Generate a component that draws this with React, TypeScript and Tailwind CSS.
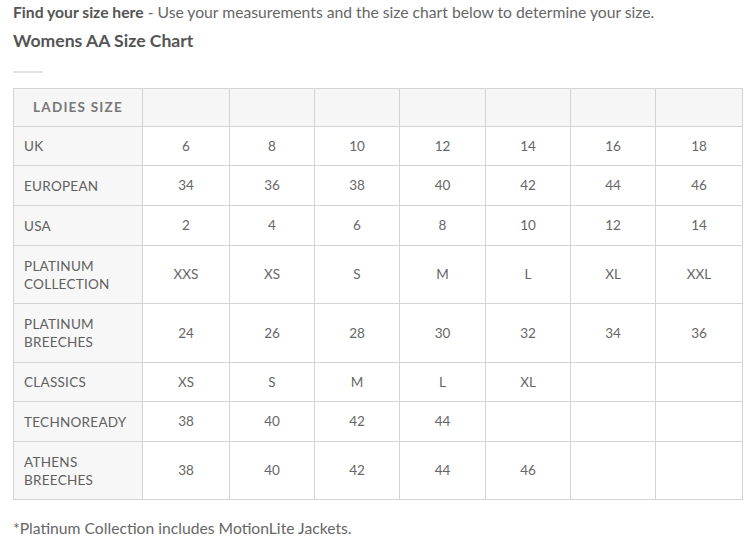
import React from 'react';

type SizeRow = {
    label: string[];
    values: string[];
    height: string;
};

const rows: SizeRow[] = [
    {label: ['UK'], values: ['6', '8', '10', '12', '14', '16', '18'], height: 'h-[39px]'},
    {label: ['EUROPEAN'], values: ['34', '36', '38', '40', '42', '44', '46'], height: 'h-[40px]'},
    {label: ['USA'], values: ['2', '4', '6', '8', '10', '12', '14'], height: 'h-[40px]'},
    {label: ['PLATINUM', 'COLLECTION'], values: ['XXS', 'XS', 'S', 'M', 'L', 'XL', 'XXL'], height: 'h-[58px]'},
    {label: ['PLATINUM', 'BREECHES'], values: ['24', '26', '28', '30', '32', '34', '36'], height: 'h-[59px]'},
    {label: ['CLASSICS'], values: ['XS', 'S', 'M', 'L', 'XL', '', ''], height: 'h-[39px]'},
    {label: ['TECHNOREADY'], values: ['38', '40', '42', '44', '', '', ''], height: 'h-[40px]'},
    {label: ['ATHENS', 'BREECHES'], values: ['38', '40', '42', '44', '46', '', ''], height: 'h-[58px]'},
];

const colWidths = ['w-[129px]', 'w-[87px]', 'w-[85px]', 'w-[85px]', 'w-[86px]', 'w-[85px]', 'w-[85px]', 'w-[87px]'];

export default function App() {
    return (
        <div className="bg-white min-h-[560px] w-[754px] pl-[13px] pt-[2px] text-[#555] font-['Lato','Liberation_Sans',sans-serif]">
            <p className="text-[15.7px] leading-[21px] text-[#666]">
                <span className="font-bold text-[#555]">Find your size here</span> - Use your measurements and the size chart below to determine your size.
            </p>
            <h2 className="mt-[6px] text-[17.6px] leading-[23px] font-bold text-[#555]">Womens AA Size Chart</h2>
            <div className="mt-[19px] w-[30px] h-[2px] bg-[#e2e2e2]"/>
            <table className="mt-[15px] border-collapse table-fixed w-[730px] text-[13.5px]">
                <colgroup>
                    {colWidths.map((w, i) => <col key={i} className={w}/>)}
                </colgroup>
                <thead>
                <tr className="h-[38px] bg-[#f6f6f6]">
                    <th className="border border-[#d4d4d4] text-center font-bold tracking-[0.09em] text-[#777] text-[13.5px]">LADIES SIZE</th>
                    {[0, 1, 2, 3, 4, 5, 6].map(i => (
                        <th key={i} className="border border-[#d4d4d4]"/>
                    ))}
                </tr>
                </thead>
                <tbody>
                {rows.map((row, r) => (
                    <tr key={r} className={row.height}>
                        <td className="border border-[#d4d4d4] bg-[#f7f7f7] pl-[10px] leading-[18px] tracking-[0.02em] text-[#606060]">
                            {row.label.map((l, i) => <div key={i}>{l}</div>)}
                        </td>
                        {row.values.map((v, i) => (
                            <td key={i} className="border border-[#d4d4d4] text-center text-[#666]">{v}</td>
                        ))}
                    </tr>
                ))}
                </tbody>
            </table>
            <p className="mt-[18px] text-[15.7px] leading-[21px] text-[#666]">*Platinum Collection includes MotionLite Jackets.</p>
        </div>
    );
}
